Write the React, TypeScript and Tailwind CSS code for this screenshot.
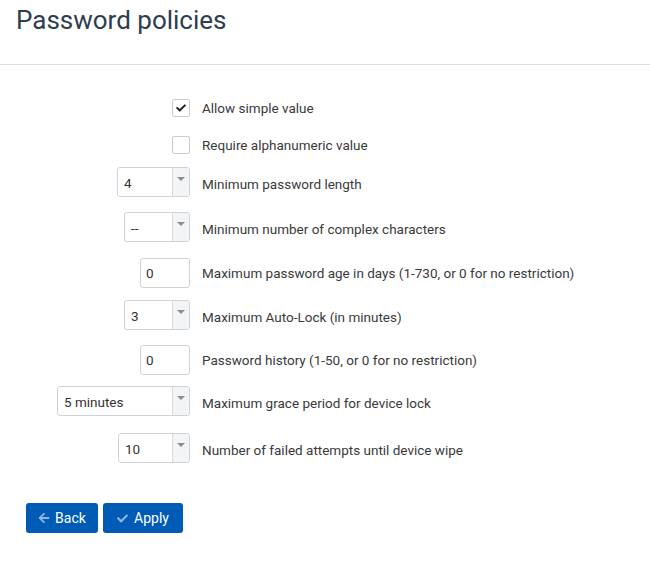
import React, { FC, ReactNode } from "react";
import { FaArrowLeft, FaCheck } from "react-icons/fa";

const font = { fontFamily: "Roboto, 'Liberation Sans', sans-serif" };

const Checkbox: FC<{ checked?: boolean }> = ({ checked }) => (
  <div className="w-[18px] h-[18px] rounded-[2px] border border-[#c9ccd1] bg-white flex items-center justify-center">
    {checked && <FaCheck className="text-[#222] w-[10px] h-[10px]" />}
  </div>
);

const Select: FC<{ value: string; width: string }> = ({ value, width }) => (
  <div className={`${width} h-[30px] flex rounded-[3px] border border-[#cfd3d8] bg-white overflow-hidden`}>
    <div className="flex-1 flex items-center pl-[6px] pt-[2px] text-[13.5px] text-[#333]">{value}</div>
    <div className="w-[17px] border-l border-[#d6d9dd] bg-[#f3f4f6] flex justify-center pt-[9px]">
      <div className="w-0 h-0 border-l-[4px] border-r-[4px] border-t-[4px] border-l-transparent border-r-transparent border-t-[#8a8d92]" />
    </div>
  </div>
);

const Input: FC<{ value: string }> = ({ value }) => (
  <div className="w-[50px] h-[30px] flex items-center pl-[5px] pt-[1px] rounded-[3px] border border-[#cfd3d8] bg-white text-[13.5px] text-[#333]">
    {value}
  </div>
);

const Row: FC<{ control: ReactNode; label: string; className: string; low?: boolean }> = ({
  control,
  label,
  className,
  low,
}) => (
  <div className={`flex items-center ${className}`}>
    <div className="w-[190px] flex justify-end">{control}</div>
    <div className={`ml-[12px] text-[13.5px] text-[#3a3a3a] ${low ? "mt-[4px]" : ""}`}>{label}</div>
  </div>
);

export default function App() {
  return (
    <div className="w-[650px] h-[570px] bg-white" style={font}>
      <div className="h-[65px] border-b border-[#dcdee2] px-[16px] pt-[3px]">
        <h1 className="text-[26px] leading-[34px] text-[#2e3d4f]">Password policies</h1>
      </div>
      <div className="flex flex-col">
        <Row className="mt-[34px] h-[18px]" control={<Checkbox checked />} label="Allow simple value" />
        <Row className="mt-[19px] h-[18px]" control={<Checkbox />} label="Require alphanumeric value" />
        <Row low className="mt-[13px] h-[30px]" control={<Select value="4" width="w-[73px]" />} label="Minimum password length" />
        <Row low className="mt-[15px] h-[30px]" control={<Select value="--" width="w-[66px]" />} label="Minimum number of complex characters" />
        <Row className="mt-[16px] h-[30px]" control={<Input value="0" />} label="Maximum password age in days (1-730, or 0 for no restriction)" />
        <Row low className="mt-[12px] h-[30px]" control={<Select value="3" width="w-[66px]" />} label="Maximum Auto-Lock (in minutes)" />
        <Row className="mt-[15px] h-[30px]" control={<Input value="0" />} label="Password history (1-50, or 0 for no restriction)" />
        <Row low className="mt-[11px] h-[30px]" control={<Select value="5 minutes" width="w-[133px]" />} label="Maximum grace period for device lock" />
        <Row low className="mt-[17px] h-[30px]" control={<Select value="10" width="w-[72px]" />} label="Number of failed attempts until device wipe" />
      </div>
      <div className="flex gap-[5px] pl-[26px] mt-[40px]">
        <button className="w-[72px] h-[30px] rounded-[3px] bg-[#005bb7] text-white text-[14px] flex items-center justify-center gap-[5px]">
          <FaArrowLeft className="w-[12px] h-[12px] text-[#8fb5e6]" />
          Back
        </button>
        <button className="w-[80px] h-[30px] rounded-[3px] bg-[#005bb7] text-white text-[14px] flex items-center justify-center gap-[6px]">
          <FaCheck className="w-[11px] h-[11px] text-[#8fb5e6]" />
          Apply
        </button>
      </div>
    </div>
  );
}
